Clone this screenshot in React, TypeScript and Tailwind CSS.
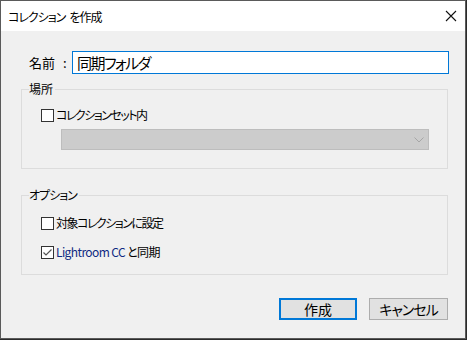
import React from "react";

const font = { fontFamily: '"Noto Sans CJK JP", "Noto Sans", sans-serif', fontFeatureSettings: "'palt'" } as React.CSSProperties;

function Box({ checked }: { checked?: boolean }) {
  return (
    <div className="w-[13px] h-[13px] border border-[#333333] bg-white flex items-center justify-center shrink-0">
      {checked && (
        <svg width="11" height="11" viewBox="0 0 11 11">
          <path d="M1.5 5.5 L4 8 L9.5 2.5" stroke="#555555" strokeWidth="1.2" fill="none" />
        </svg>
      )}
    </div>
  );
}

export default function App() {
  return (
    <div className="w-[467px] h-[340px] bg-[#2b2b2b] overflow-hidden font-normal" style={font}>
      <div className="w-[466px] h-[339px] border border-[#5a5a5a] bg-[#f0f0f0] flex flex-col">
        <div className="h-[30px] bg-white flex items-center justify-between pl-[7px] pr-[7px] shrink-0">
          <span className="text-[12px] text-black leading-[14px] mt-[1px] tracking-[-1px]">
            コレクション<span className="ml-[4px]">を作成</span>
          </span>
          <svg width="12" height="12" viewBox="0 0 12 12" className="mr-[1px]">
            <path d="M1 1 L11 11 M11 1 L1 11" stroke="#111" strokeWidth="1.1" />
          </svg>
        </div>
        <div className="flex flex-col pl-[20px]">
          <div className="mt-[20px] h-[23px] flex items-center">
            <div className="w-[51px] pl-[8px] flex items-center text-[13px] text-black leading-[16px]">
              <span className="w-[34px]">名前</span>
              <span>:</span>
            </div>
            <div className="w-[377px] h-[23px] border border-[#0078d7] bg-white flex items-center pl-[4px] text-[15px] leading-[18px] text-black tracking-[-1.5px]">
              同期フォルダ
            </div>
          </div>

          <div className="mt-[15px] relative w-[427px] h-[80px] border border-[#dcdcdc]">
            <span className="absolute -top-[8px] left-[7px] bg-[#f0f0f0] pr-[2px] text-[12px] leading-[14px] text-black">場所</span>
            <div className="ml-[19px] mt-[18px] flex items-center gap-[2px]">
              <Box />
              <span className="text-[12px] leading-[14px] text-black tracking-[-1.5px]">コレクションセット内</span>
            </div>
            <div className="ml-[39px] mt-[7px] w-[368px] h-[21px] border border-[#bdbdbd] bg-[#cccccc] flex items-center justify-end pr-[4px]">
              <svg width="10" height="6" viewBox="0 0 10 6">
                <path d="M0.5 0.5 L5 5 L9.5 0.5" stroke="#a6a6a6" strokeWidth="1" fill="none" />
              </svg>
            </div>
          </div>

          <div className="mt-[26px] relative w-[427px] h-[80px] border border-[#dcdcdc]">
            <span className="absolute -top-[8px] left-[7px] bg-[#f0f0f0] pr-[2px] text-[12px] leading-[14px] text-black tracking-[-1px]">オプション</span>
            <div className="ml-[19px] mt-[20px] flex items-center gap-[2px]">
              <Box />
              <span className="text-[12px] leading-[14px] text-black tracking-[-1.5px]">対象コレクションに設定</span>
            </div>
            <div className="ml-[19px] mt-[15px] flex items-center gap-[2px]">
              <Box checked />
              <span className="text-[12px] leading-[14px] text-black tracking-[-0.6px]">
                <span className="text-[#0f2a82]">Lightroom CC</span> と同期
              </span>
            </div>
          </div>

          <div className="mt-[23px] w-[427px] flex justify-end gap-[12px]">
            <div className="w-[78px] h-[22px] border-2 border-[#0078d7] bg-[#e1e1e1] flex items-center justify-center text-[14px] leading-[16px] text-black">
              作成
            </div>
            <div className="w-[79px] h-[22px] border border-[#adadad] bg-[#e1e1e1] flex items-center justify-center text-[14px] leading-[16px] text-black tracking-[-1px]">
              キャンセル
            </div>
          </div>
        </div>
      </div>
    </div>
  );
}
